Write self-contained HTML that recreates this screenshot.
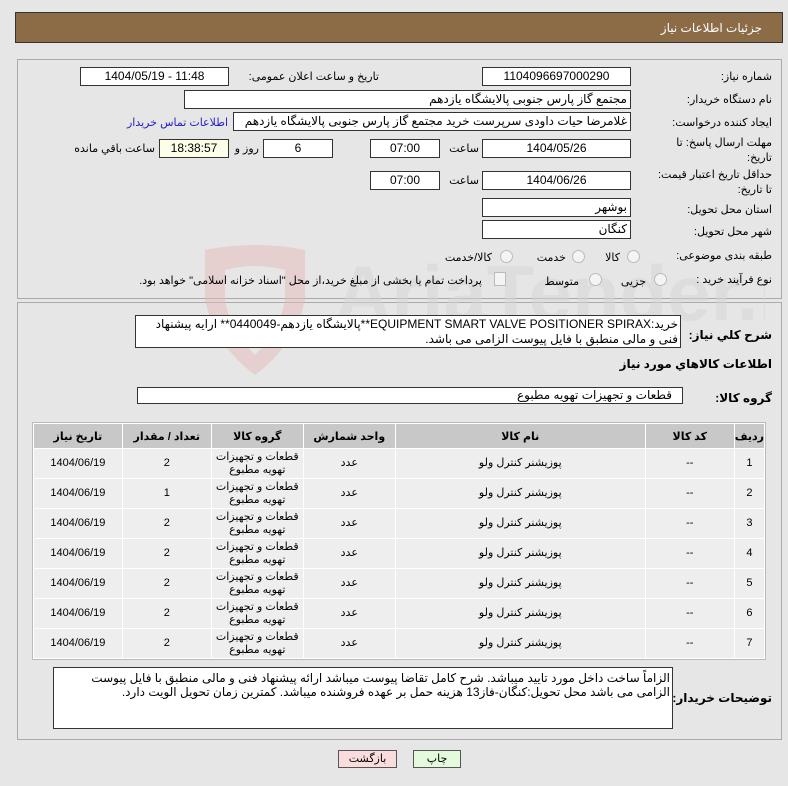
<!DOCTYPE html>
<html><head><meta charset="utf-8"><style>
body{margin:0;width:788px;height:786px;background:#e6e6e6;font-family:"Liberation Sans","DejaVu Sans",sans-serif;font-size:11px;color:#000;position:relative;overflow:hidden}
.a{position:absolute}
.hdr{left:15px;top:12px;width:768px;height:31px;background:#8b6c46;border:1px solid #333;box-sizing:border-box}
.hdr span{position:absolute;right:20px;top:8px;color:#fff;font-size:12px}
.pan{border:1px solid #aaa;box-sizing:border-box;background:#e6e6e6}
.lb{direction:rtl;text-align:right;white-space:nowrap}
.bx{background:#fff;border:1px solid #333;box-sizing:border-box;text-align:center;font-size:12px;line-height:16px;white-space:nowrap;overflow:hidden}
.rt{text-align:right;direction:rtl;padding-right:3px}
.rad{width:11px;height:11px;border-radius:50%;border:1px solid #bbb;background:#f4f4f4}
table{border-collapse:collapse;direction:rtl;font-size:11px}
td,th{border:1px solid #fff;text-align:center;padding:0}
th{background:#c8c8c8;height:24px;font-weight:bold}
td{background:#eeeeee;height:29px;line-height:13px}
.bt{font-weight:bold;font-size:12px}
</style></head><body>
<div class="a hdr"><span>جزئیات اطلاعات نیاز</span></div>
<div class="a pan" style="left:17px;top:59px;width:765px;height:240px"></div>
<div class="a pan" style="left:17px;top:302px;width:765px;height:438px"></div>

<!-- watermark -->
<svg class="a" style="left:195px;top:245px" width="570" height="130"><g fill="#e3b8b8" opacity="0.5"><path d="M10 5 Q60 -5 110 5 L110 55 Q100 100 60 130 Q20 100 10 55 Z M30 25 L30 55 Q35 85 60 110 Q85 85 90 55 L90 25 Q60 17 30 25Z"/></g><text x="140" y="75" font-size="78" font-weight="bold" fill="#d6d6d6" opacity="0.5" font-family="Liberation Sans">AriaTender.neT</text></svg>

<div class="a lb" style="right:16px;top:70px">شماره نیاز:</div>
<div class="a bx" style="left:482px;top:67px;width:149px;height:19px">1104096697000290</div>
<div class="a lb" style="right:409px;top:70px">تاریخ و ساعت اعلان عمومی:</div>
<div class="a bx" style="left:80px;top:67px;width:149px;height:19px">1404/05/19 - 11:48</div>

<div class="a lb" style="right:16px;top:93px">نام دستگاه خریدار:</div>
<div class="a bx rt" style="left:184px;top:90px;width:447px;height:19px">مجتمع گاز پارس جنوبی  پالایشگاه یازدهم</div>

<div class="a lb" style="right:16px;top:116px">ایجاد کننده درخواست:</div>
<div class="a bx rt" style="left:233px;top:112px;width:398px;height:19px">غلامرضا حیات داودی سرپرست خرید مجتمع گاز پارس جنوبی  پالایشگاه یازدهم</div>
<div class="a lb" style="right:560px;top:116px;color:#2222cc">اطلاعات تماس خریدار</div>

<div class="a lb" style="right:16px;top:136px;line-height:15px">مهلت ارسال پاسخ: تا<br>تاریخ:</div>
<div class="a bx" style="left:482px;top:139px;width:149px;height:19px">1404/05/26</div>
<div class="a lb" style="right:309px;top:142px">ساعت</div>
<div class="a bx" style="left:370px;top:139px;width:70px;height:19px">07:00</div>
<div class="a bx" style="left:263px;top:139px;width:70px;height:19px">6</div>
<div class="a lb" style="right:529px;top:142px">روز و</div>
<div class="a bx" style="left:159px;top:139px;width:70px;height:19px;background:#fefee8">18:38:57</div>
<div class="a lb" style="right:633px;top:142px">ساعت باقي مانده</div>

<div class="a lb" style="right:16px;top:168px;line-height:15px">حداقل تاریخ اعتبار قیمت:<br>تا تاریخ:</div>
<div class="a bx" style="left:482px;top:171px;width:149px;height:19px">1404/06/26</div>
<div class="a lb" style="right:309px;top:174px">ساعت</div>
<div class="a bx" style="left:370px;top:171px;width:70px;height:19px">07:00</div>

<div class="a lb" style="right:16px;top:203px">استان محل تحویل:</div>
<div class="a bx rt" style="left:482px;top:198px;width:149px;height:19px">بوشهر</div>
<div class="a lb" style="right:16px;top:225px">شهر محل تحویل:</div>
<div class="a bx rt" style="left:482px;top:220px;width:149px;height:19px">کنگان</div>

<div class="a lb" style="right:16px;top:249px">طبقه بندی موضوعی:</div>
<div class="a rad" style="left:627px;top:250px"></div><div class="a lb" style="right:168px;top:251px">کالا</div>
<div class="a rad" style="left:572px;top:250px"></div><div class="a lb" style="right:222px;top:251px">خدمت</div>
<div class="a rad" style="left:500px;top:250px"></div><div class="a lb" style="right:296px;top:251px">کالا/خدمت</div>

<div class="a lb" style="right:16px;top:273px">نوع فرآیند خرید :</div>
<div class="a rad" style="left:654px;top:273px"></div><div class="a lb" style="right:142px;top:275px">جزیی</div>
<div class="a rad" style="left:589px;top:273px"></div><div class="a lb" style="right:209px;top:275px">متوسط</div>
<div class="a" style="left:494px;top:272px;width:10px;height:12px;border:1px solid #bbb;background:#f4f4f4"></div>
<div class="a lb" style="right:306px;top:274px">پرداخت تمام یا بخشی از مبلغ خرید،از محل "اسناد خزانه اسلامی" خواهد بود.</div>

<div class="a lb bt" style="right:16px;top:328px">شرح کلي نیاز:</div>
<div class="a" style="left:135px;top:315px;width:546px;height:33px;background:#fff;border:1px solid #333;box-sizing:border-box;direction:rtl;text-align:right;font-size:12px;line-height:15px;padding:1px 2px;overflow:hidden">خرید:EQUIPMENT SMART VALVE POSITIONER SPIRAX**پالایشگاه یازدهم-0440049** ارایه پیشنهاد فنی و مالی منطبق با فایل پیوست الزامی می باشد.</div>
<div class="a lb bt" style="right:16px;top:357px">اطلاعات کالاهاي مورد نیاز</div>
<div class="a lb bt" style="right:16px;top:391px">گروه کالا:</div>
<div class="a bx rt" style="left:137px;top:387px;width:546px;height:17px;padding-right:10px;line-height:15px">قطعات و تجهیزات تهویه مطبوع</div>

<table class="a" style="left:33px;top:423px;width:732px;outline:1px solid #bbb">
<tr><th style="width:22px">ردیف</th><th style="width:88px">کد کالا</th><th style="width:249px">نام کالا</th><th style="width:91px">واحد شمارش</th><th style="width:91px">گروه کالا</th><th style="width:88px">تعداد / مقدار</th><th>تاریخ نیاز</th></tr>
<tr><td>1</td><td>--</td><td>پوزیشنر کنترل ولو</td><td>عدد</td><td>قطعات و تجهیزات<br>تهویه مطبوع</td><td>2</td><td>1404/06/19</td></tr>
<tr><td>2</td><td>--</td><td>پوزیشنر کنترل ولو</td><td>عدد</td><td>قطعات و تجهیزات<br>تهویه مطبوع</td><td>1</td><td>1404/06/19</td></tr>
<tr><td>3</td><td>--</td><td>پوزیشنر کنترل ولو</td><td>عدد</td><td>قطعات و تجهیزات<br>تهویه مطبوع</td><td>2</td><td>1404/06/19</td></tr>
<tr><td>4</td><td>--</td><td>پوزیشنر کنترل ولو</td><td>عدد</td><td>قطعات و تجهیزات<br>تهویه مطبوع</td><td>2</td><td>1404/06/19</td></tr>
<tr><td>5</td><td>--</td><td>پوزیشنر کنترل ولو</td><td>عدد</td><td>قطعات و تجهیزات<br>تهویه مطبوع</td><td>2</td><td>1404/06/19</td></tr>
<tr><td>6</td><td>--</td><td>پوزیشنر کنترل ولو</td><td>عدد</td><td>قطعات و تجهیزات<br>تهویه مطبوع</td><td>2</td><td>1404/06/19</td></tr>
<tr><td>7</td><td>--</td><td>پوزیشنر کنترل ولو</td><td>عدد</td><td>قطعات و تجهیزات<br>تهویه مطبوع</td><td>2</td><td>1404/06/19</td></tr>
</table>

<div class="a lb bt" style="right:16px;top:691px">توضیحات خریدار:</div>
<div class="a" style="left:53px;top:667px;width:620px;height:62px;background:#fff;border:1px solid #333;box-sizing:border-box;direction:rtl;text-align:right;font-size:12px;line-height:14px;padding:3px 2px;overflow:hidden">الزاماً ساخت داخل مورد تایید میباشد. شرح کامل تقاضا پیوست میباشد ارائه پیشنهاد فنی و مالی منطبق با فایل پیوست الزامی می باشد محل تحویل:کنگان-فاز13 هزینه حمل بر عهده فروشنده میباشد. کمترین زمان تحویل الویت دارد.</div>

<div class="a" style="left:338px;top:750px;width:59px;height:18px;background:#fadcdc;border:1px solid #555;box-sizing:border-box;text-align:center;line-height:16px">بازگشت</div>
<div class="a" style="left:413px;top:750px;width:48px;height:18px;background:#e4fadc;border:1px solid #555;box-sizing:border-box;text-align:center;line-height:16px">چاپ</div>
</body></html>
